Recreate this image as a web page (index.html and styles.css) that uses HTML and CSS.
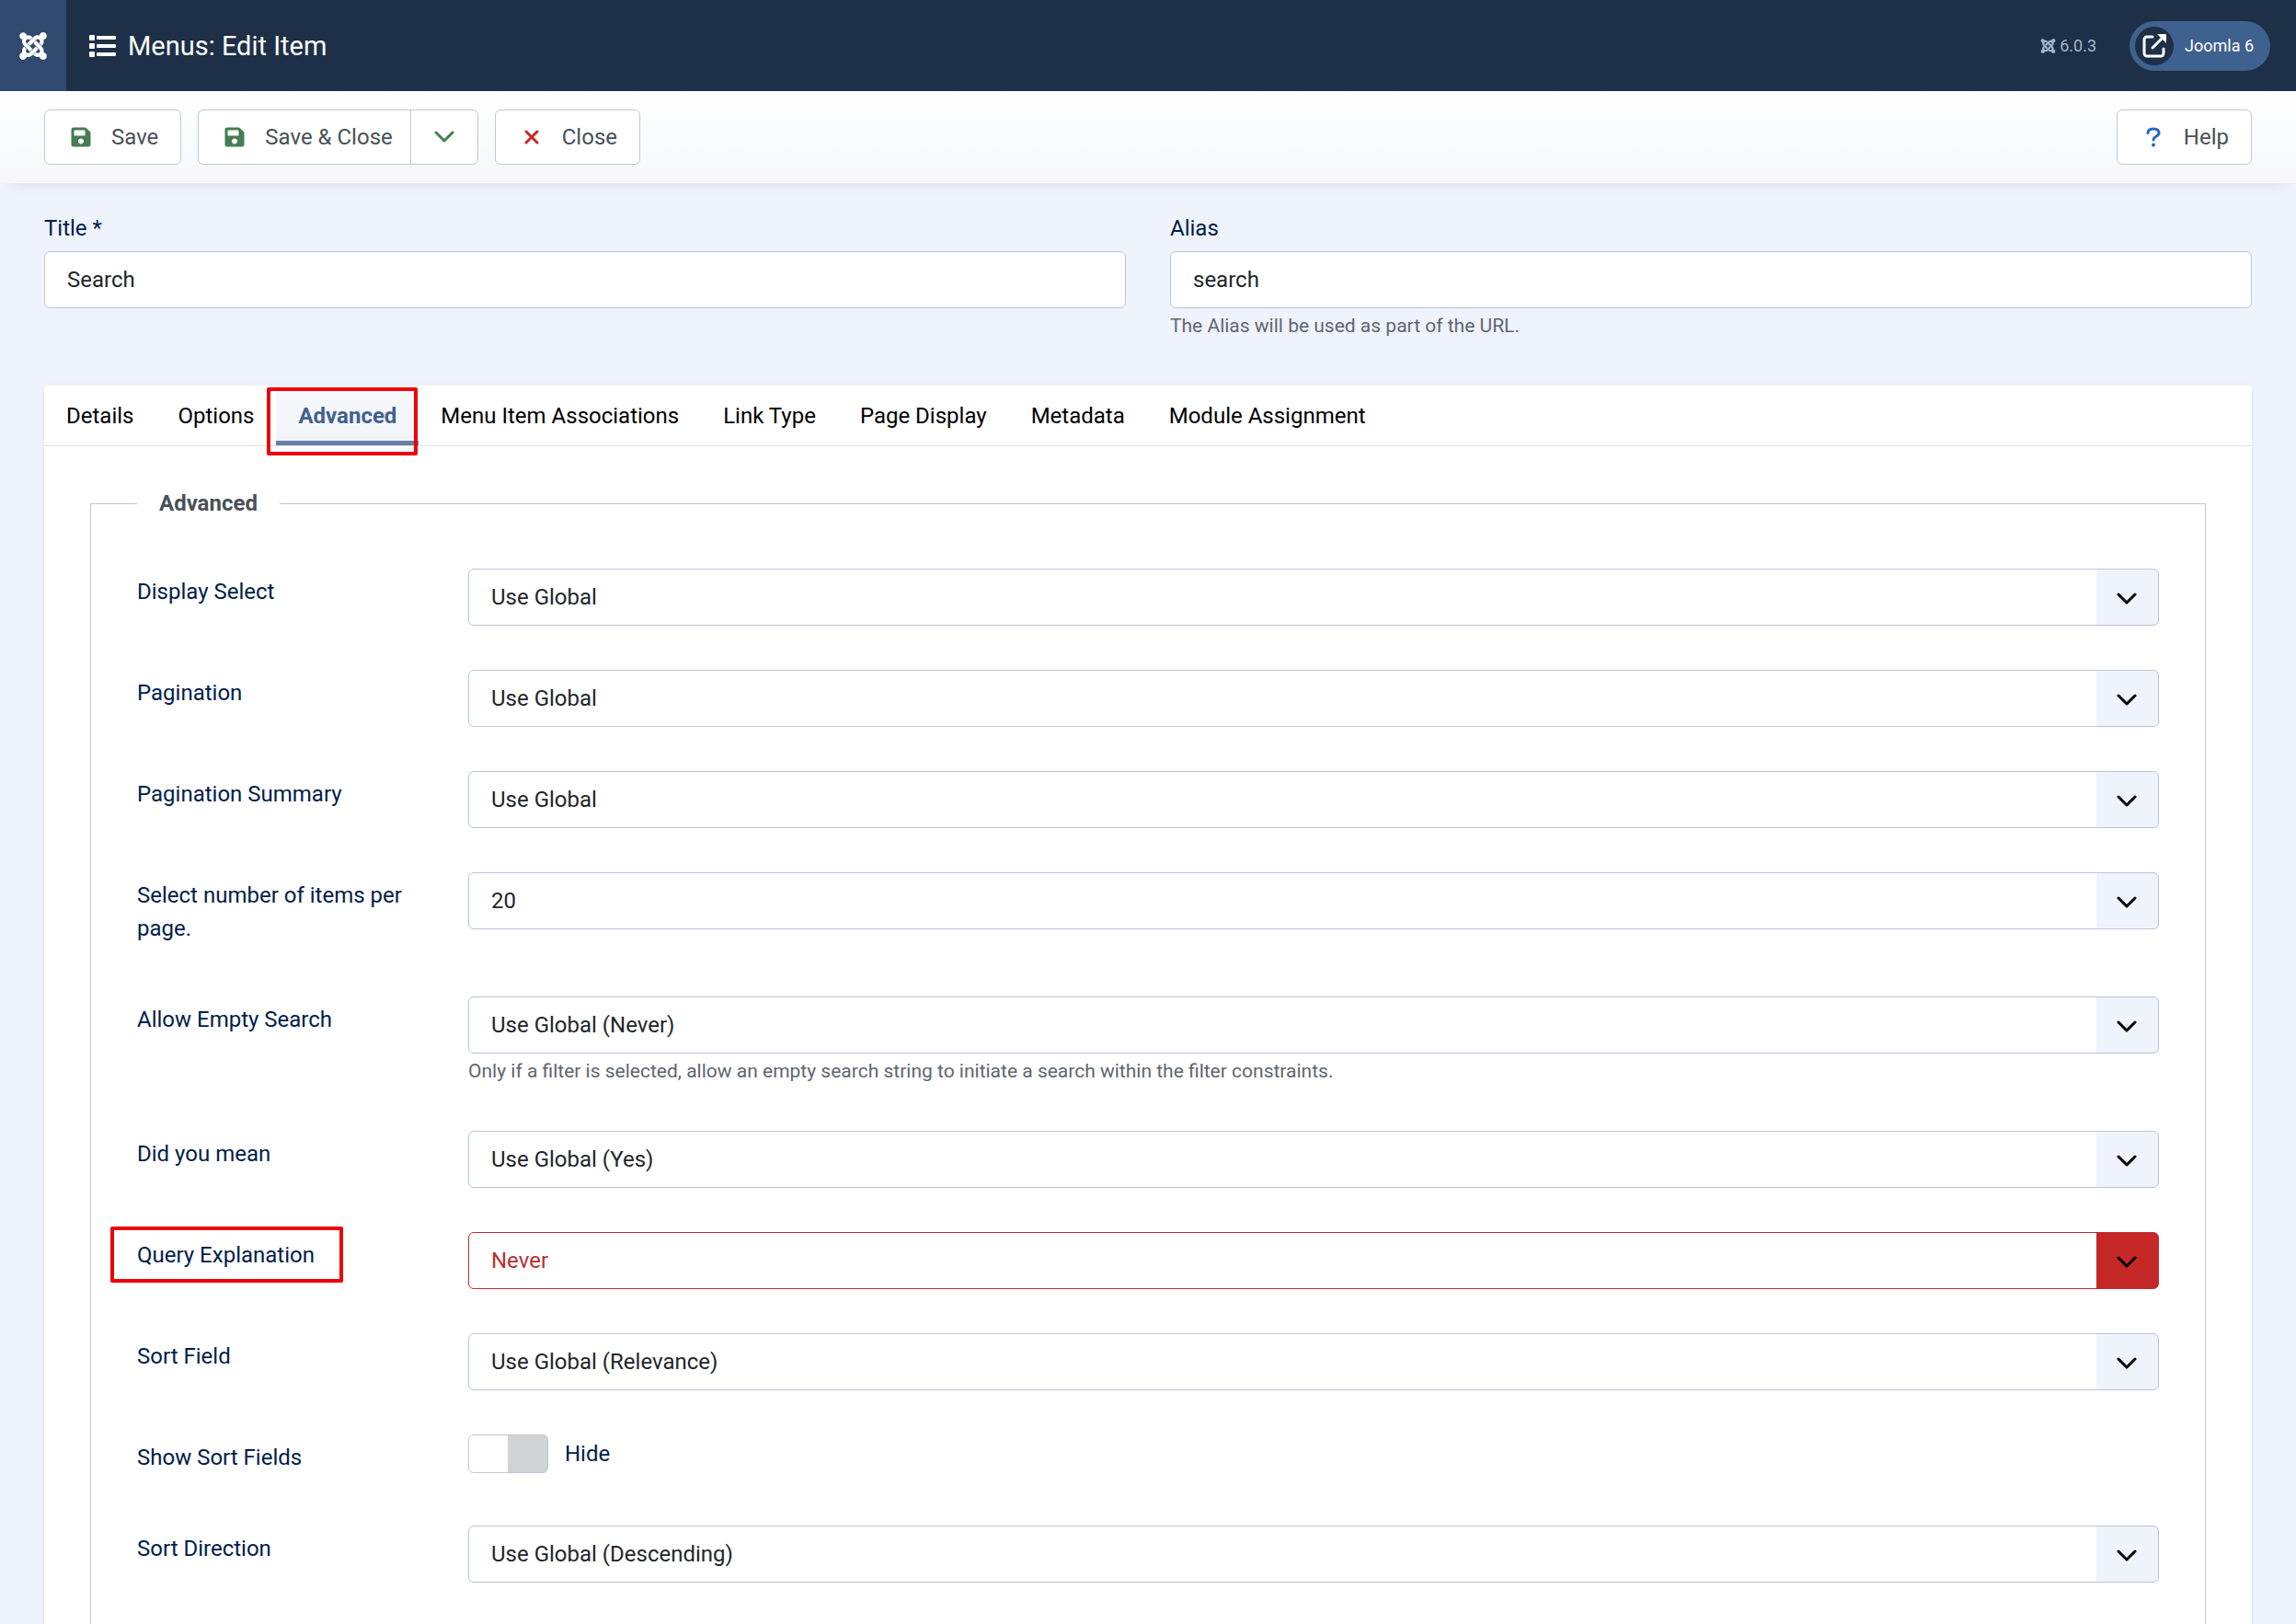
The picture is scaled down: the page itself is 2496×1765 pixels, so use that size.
FILE: index.html
```html
<!DOCTYPE html>
<html lang="en">
<head>
  <meta charset="UTF-8">
  <meta name="viewport" content="width=device-width, initial-scale=1">
  <title>Menus: Edit Item</title>
  <link rel="stylesheet" href="styles.css">
</head>
<body>
  <svg class="defs" aria-hidden="true">
    <symbol id="joomla" viewBox="0 0 448 512">
      <path fill="currentColor" d="M.6 92.1C.6 58.800 27.400 32 60.400 32c30 0 54.500 21.900 59.200 50.200 32.600-7.600 67.100.6 96.500 30l-44.300 44.300c-20.500-20.500-42.600-16.300-55.400-3.500-14.300 14.300-14.300 37.900 0 52.200l99.500 99.500-44 44.300c-87.700-87.200-49.700-49.700-99.800-99.700-26.800-26.500-35-64.800-24.800-98.900C20.400 144.600.6 120.700.6 92.100zm129.500 116.400l44.300 44.300c10-10 89.700-89.700 99.700-99.800 14.300-14.300 37.600-14.300 51.900 0 12.800 12.800 17 35-3.500 55.400l44 44.300c31.200-31.200 38.500-67.600 28.900-101.200 29.200-4.100 51.900-29.200 51.900-59.500 0-33.200-26.800-60.100-59.800-60.100-30.300 0-55.400 22.500-59.500 51.600-33.800-9.900-71.700-1.500-98.300 25.100-18.300 19.100-71.100 71.500-99.600 99.900zm266.300 152.200c8.200-32.700-.9-68.500-26.300-93.900-11.800-12.200 5 4.700-99.500-99.700l-44.300 44.300 99.700 99.700c14.300 14.300 14.300 37.600 0 51.900-12.800 12.800-35 17-55.400-3.500l-44 44.300c27.600 30.200 68 38.800 102.700 28 5.500 27.400 29.700 48.100 58.900 48.100 33 0 59.800-26.800 59.800-60.100 0-30.200-22.500-55-51.600-59.100zm-84.300-53.100l-44-44.300c-87 86.400-50.400 50.400-99.700 99.800-14.300 14.300-37.600 14.300-51.900 0-13.100-13.400-16.900-35.300 3.200-55.400l-44-44.300c-30.200 30.200-38 65.200-29.500 98.300-26.700 6-46.200 29.900-46.200 58.200C0 453.200 26.800 480 59.800 480c28.600 0 52.500-19.800 58.600-46.700 32.700 8.200 68.500-.6 94.200-26 32.100-32 12.200-12.400 99.500-99.700z"/>
    </symbol>
    <symbol id="list" viewBox="0 0 30 24">
      <g fill="currentColor">
        <rect x="1" y="0" width="6" height="6" rx="1"/>
        <rect x="1" y="9" width="6" height="6" rx="1"/>
        <rect x="1" y="18" width="6" height="6" rx="1"/>
        <rect x="9" y="1" width="21" height="4" rx="1"/>
        <rect x="9" y="10" width="21" height="4" rx="1"/>
        <rect x="9" y="19" width="21" height="4" rx="1"/>
      </g>
    </symbol>
    <symbol id="save" viewBox="0 0 448 512">
      <path fill="currentColor" d="M433.900 129.900l-83.900-83.900A48 48 0 0 0 316.100 32H48C21.500 32 0 53.500 0 80v352c0 26.500 21.500 48 48 48h352c26.500 0 48-21.500 48-48V163.900a48 48 0 0 0-14.100-34zM224 416c-35.300 0-64-28.700-64-64s28.700-64 64-64 64 28.700 64 64-28.700 64-64 64zm96-304.500V212c0 6.600-5.400 12-12 12H76c-6.600 0-12-5.400-12-12V108c0-6.600 5.400-12 12-12h228.500c3.200 0 6.200 1.300 8.500 3.500l3.500 3.500a12 12 0 0 1 3.500 8.500z"/>
    </symbol>
    <symbol id="chevron" viewBox="0 0 22 14">
      <path fill="none" stroke="currentColor" stroke-width="3" stroke-linecap="round" stroke-linejoin="round" d="M2 2l9 9 9-9"/>
    </symbol>
    <symbol id="cross" viewBox="0 0 16 16">
      <path fill="none" stroke="currentColor" stroke-width="3" stroke-linecap="round" d="M2 2l12 12M14 2L2 14"/>
    </symbol>
    <symbol id="question" viewBox="0 0 16 22">
      <path fill="none" stroke="currentColor" stroke-width="3" stroke-linecap="round" stroke-linejoin="round" d="M2 6.500C2 3.500 4 2 8 2s6 2 6 4.500c0 4-6 3.500-6 7.500"/>
      <circle cx="8" cy="19.500" r="2" fill="currentColor"/>
    </symbol>
    <symbol id="external" viewBox="0 0 26 26">
      <path fill="none" stroke="currentColor" stroke-width="3" stroke-linecap="round" stroke-linejoin="round" d="M11 3H5a3 3 0 0 0-3 3v15a3 3 0 0 0 3 3h15a3 3 0 0 0 3-3v-5M11 15L21 5"/>
      <path fill="currentColor" d="M16 0h9a1 1 0 0 1 1 1v9z"/>
    </symbol>
  </svg>

  <header class="header">
    <a class="logo" href="#" aria-label="Joomla"><svg><use href="#joomla"/></svg></a>
    <h1 class="page-title"><svg><use href="#list"/></svg>Menus: Edit Item</h1>
    <div class="version"><svg><use href="#joomla"/></svg>6.0.3</div>
    <a class="site-link" href="#"><span class="site-icon"><svg><use href="#external"/></svg></span>Joomla 6</a>
  </header>

  <div class="toolbar">
    <button type="button" class="btn btn-save"><svg><use href="#save"/></svg>Save</button>
    <div class="btn-group">
      <button type="button" class="btn btn-save"><svg><use href="#save"/></svg>Save &amp; Close</button>
      <button type="button" class="btn btn-toggle" aria-label="More save options"><svg><use href="#chevron"/></svg></button>
    </div>
    <button type="button" class="btn btn-close"><svg><use href="#cross"/></svg>Close</button>
    <button type="button" class="btn btn-help"><svg><use href="#question"/></svg>Help</button>
  </div>

  <main class="content">
    <div class="title-row">
      <div class="title-field">
        <label for="title">Title *</label>
        <input type="text" class="control" id="title" value="Search">
      </div>
      <div class="title-field">
        <label for="alias">Alias</label>
        <input type="text" class="control" id="alias" value="search">
        <p class="hint">The Alias will be used as part of the URL.</p>
      </div>
    </div>

    <div class="card">
      <div class="tabs" role="tablist">
        <button type="button" class="tab" role="tab">Details</button>
        <button type="button" class="tab" role="tab">Options</button>
        <button type="button" class="tab active" role="tab" aria-selected="true">Advanced</button>
        <button type="button" class="tab" role="tab">Menu Item Associations</button>
        <button type="button" class="tab" role="tab">Link Type</button>
        <button type="button" class="tab" role="tab">Page Display</button>
        <button type="button" class="tab" role="tab">Metadata</button>
        <button type="button" class="tab" role="tab">Module Assignment</button>
      </div>

      <fieldset class="options">
        <legend>Advanced</legend>

        <div class="row">
          <label for="display-select">Display Select</label>
          <div class="field">
            <select class="control" id="display-select"><option>Use Global</option></select>
          </div>
        </div>

        <div class="row">
          <label for="pagination">Pagination</label>
          <div class="field">
            <select class="control" id="pagination"><option>Use Global</option></select>
          </div>
        </div>

        <div class="row">
          <label for="pagination-summary">Pagination Summary</label>
          <div class="field">
            <select class="control" id="pagination-summary"><option>Use Global</option></select>
          </div>
        </div>

        <div class="row">
          <label for="per-page">Select number of items per page.</label>
          <div class="field">
            <select class="control" id="per-page"><option>20</option></select>
          </div>
        </div>

        <div class="row">
          <label for="empty-search">Allow Empty Search</label>
          <div class="field">
            <select class="control" id="empty-search"><option>Use Global (Never)</option></select>
            <p class="hint">Only if a filter is selected, allow an empty search string to initiate a search within the filter constraints.</p>
          </div>
        </div>

        <div class="row">
          <label for="did-you-mean">Did you mean</label>
          <div class="field">
            <select class="control" id="did-you-mean"><option>Use Global (Yes)</option></select>
          </div>
        </div>

        <div class="row">
          <label for="query-explanation"><span class="marked">Query Explanation</span></label>
          <div class="field">
            <select class="control danger" id="query-explanation"><option>Never</option></select>
          </div>
        </div>

        <div class="row">
          <label for="sort-field">Sort Field</label>
          <div class="field">
            <select class="control" id="sort-field"><option>Use Global (Relevance)</option></select>
          </div>
        </div>

        <div class="row">
          <label for="show-sort">Show Sort Fields</label>
          <div class="field switch-field">
            <input type="checkbox" class="switch" id="show-sort">
            <span>Hide</span>
          </div>
        </div>

        <div class="row">
          <label for="sort-direction">Sort Direction</label>
          <div class="field">
            <select class="control" id="sort-direction"><option>Use Global (Descending)</option></select>
          </div>
        </div>
      </fieldset>
    </div>
  </main>
</body>
</html>
```
FILE: styles.css
```css
* {
  box-sizing: border-box;
}

body {
  margin: 0;
  font-family: Roboto, "Liberation Sans", sans-serif;
  font-size: 24px;
  line-height: 36px;
  color: #22262a;
  background-color: #eff3fb;
}

button, input, select {
  font: inherit;
}

svg {
  display: block;
  flex: none;
}

.defs {
  display: none;
}

/* header */
.header {
  display: flex;
  align-items: center;
  height: 99px;
  padding-right: 28px;
  background-color: #1e3047;
  color: #fff;
}

.logo {
  display: flex;
  align-items: center;
  justify-content: center;
  width: 72px;
  height: 100%;
  background-color: #2f4a6e;
  color: #fff;
}

.logo svg {
  width: 30px;
  height: 34px;
}

.page-title {
  display: flex;
  align-items: center;
  gap: 13px;
  margin: 0 auto 0 24px;
  font-size: 29px;
  font-weight: 400;
}

.page-title svg {
  width: 30px;
  height: 24px;
}

.version {
  display: flex;
  align-items: center;
  gap: 4px;
  margin-right: 36px;
  font-size: 18px;
  color: #a5b5ca;
}

.version svg {
  width: 17px;
  height: 18px;
}

.site-link {
  display: flex;
  align-items: center;
  gap: 12px;
  height: 54px;
  padding: 0 18px 0 6px;
  border-radius: 27px;
  background-color: #3f618f;
  color: #fff;
  font-size: 18px;
  text-decoration: none;
}

.site-icon {
  display: flex;
  align-items: center;
  justify-content: center;
  width: 42px;
  height: 42px;
  border-radius: 50%;
  background-color: #1e3047;
}

.site-icon svg {
  width: 26px;
  height: 26px;
}

/* toolbar */
.toolbar {
  display: flex;
  align-items: center;
  gap: 18px;
  height: 100px;
  padding: 0 48px;
  background: linear-gradient(#fff, #f5f7fb);
  box-shadow: 0 12px 12px -12px rgba(30, 48, 71, 0.15);
}

.btn {
  display: flex;
  align-items: center;
  height: 60px;
  padding: 0 24px;
  border: 1px solid #c3c8ce;
  border-radius: 6px;
  background-color: #fff;
  color: #495057;
  cursor: pointer;
}

.btn-group {
  display: flex;
}

.btn-group .btn:first-child {
  padding-right: 19px;
  border-radius: 6px 0 0 6px;
}

.btn-group .btn:last-child {
  margin-left: -1px;
  border-radius: 0 6px 6px 0;
}

.btn-save svg {
  width: 30px;
  height: 24px;
  margin-right: 18px;
  color: #457d54;
}

.btn-toggle svg {
  width: 24px;
  height: 14px;
  color: #457d54;
}

.btn-close svg {
  width: 30px;
  height: 16px;
  margin-right: 18px;
  color: #c52827;
}

.btn-help {
  margin-left: auto;
}

.btn-help svg {
  width: 30px;
  height: 22px;
  margin-right: 18px;
  color: #2a69b8;
}

/* title and alias */
.content {
  padding: 31px 48px 0;
}

.title-row {
  display: grid;
  grid-template-columns: 1fr 1fr;
  gap: 48px;
}

label,
.switch-field {
  color: #001d4a;
}

.title-field label {
  display: block;
  margin-bottom: 7px;
}

.control {
  display: block;
  width: 100%;
  height: 62px;
  padding: 0 24px;
  border: 1px solid #bcc4d9;
  border-radius: 6px;
  background-color: #fff;
  color: #22262a;
}

.hint {
  margin: 3px 0 0;
  font-size: 21px;
  line-height: 32px;
  color: #5e6670;
}

/* tabs */
.card {
  margin-top: 49px;
  padding-bottom: 48px;
  border-radius: 6px;
  background-color: #fff;
  box-shadow: 0 2px 8px rgba(30, 48, 71, 0.05);
}

.tabs {
  display: flex;
  height: 66px;
  border-bottom: 1px solid #dee2e6;
}

.tab {
  position: relative;
  padding: 0 24px;
  border: 0;
  background: none;
  color: #000;
  cursor: pointer;
}

.tab.active {
  background: linear-gradient(#f7f8fc, #f3f4f9);
  box-shadow: inset 0 -5px 0 #6580a8;
  color: #41618f;
  font-weight: 700;
}

/* red frames around the tab and the option being explained */
.tab.active::after,
.marked::after {
  content: "";
  position: absolute;
  inset: 2px 1px -11px -10px;
  border: 4px solid #f00008;
  border-radius: 2px;
}

.marked {
  position: relative;
}

.marked::after {
  inset: -17px -31px -16px -29px;
}

/* options */
.options {
  margin: 44px 50px 0;
  padding: 53px 50px 50px;
  border: 1px solid #c0c5d6;
}

.options legend {
  padding: 0 24px;
  color: #495057;
  font-weight: 700;
}

.row {
  display: flex;
  margin-bottom: 48px;
}

.row label {
  flex: none;
  width: 360px;
  padding: 7px 48px 8px 0;
}

.field {
  flex: 1;
}

.field .hint {
  margin-bottom: 1px;
}

select.control {
  appearance: none;
  padding-right: 92px;
  background-image:
    url("data:image/svg+xml,%3Csvg xmlns='http://www.w3.org/2000/svg' width='22' height='14'%3E%3Cpath fill='none' stroke='%23000' stroke-width='3' stroke-linecap='round' stroke-linejoin='round' d='M2 2l9 9 9-9'/%3E%3C/svg%3E"),
    linear-gradient(#eff3fb, #eff3fb);
  background-repeat: no-repeat;
  background-position: right 23px top 25px, right center;
  background-size: 22px 14px, 67px 100%;
}

select.danger {
  border-color: #b7302f;
  color: #b7302f;
  background-image:
    url("data:image/svg+xml,%3Csvg xmlns='http://www.w3.org/2000/svg' width='22' height='14'%3E%3Cpath fill='none' stroke='%23000' stroke-width='3' stroke-linecap='round' stroke-linejoin='round' d='M2 2l9 9 9-9'/%3E%3C/svg%3E"),
    linear-gradient(#c52827, #c52827);
}

.switch-field {
  display: flex;
  align-items: center;
  gap: 18px;
  height: 42px;
}

.switch {
  appearance: none;
  width: 87px;
  height: 42px;
  margin: 0;
  border: 1px solid #c0c5d6;
  border-radius: 6px;
  background: linear-gradient(90deg, #fff 50%, #d1d2d3 50%);
}

.switch:checked {
  background: linear-gradient(90deg, #457d54 50%, #fff 50%);
}
```
